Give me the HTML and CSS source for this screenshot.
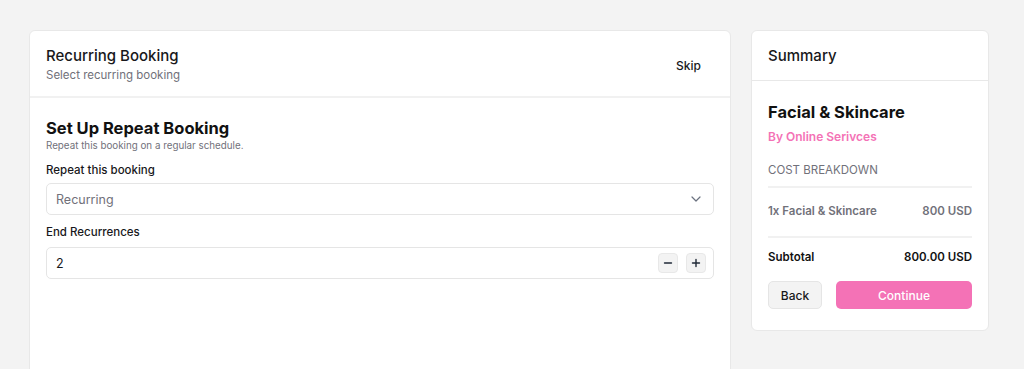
FILE: index.html
```html
<!DOCTYPE html>
<html>
<head>
    <meta charset="UTF-8">
    <title>Recurring Booking</title>
    <link rel="stylesheet" href="styles.css">
</head>
<body>
<div class="page">

    <div class="card main_card">
        <div class="card_head">
            <div>
                <h2 class="card_title">Recurring Booking</h2>
                <p class="card_sub">Select recurring booking</p>
            </div>
            <button class="skip_btn" type="button">Skip</button>
        </div>
        <div class="card_body">
            <h3 class="section_title">Set Up Repeat Booking</h3>
            <p class="section_sub">Repeat this booking on a regular schedule.</p>

            <div class="field">
                <label class="field_label">Repeat this booking</label>
                <div class="input_box">
                    <span class="placeholder">Recurring</span>
                    <svg class="chevron" width="10" height="6" viewBox="0 0 10 6">
                        <path d="M1 1l4 4 4-4" fill="none" stroke="#6b7280" stroke-width="1.2" stroke-linecap="round" stroke-linejoin="round"/>
                    </svg>
                </div>
            </div>

            <div class="field">
                <label class="field_label">End Recurrences</label>
                <div class="input_box">
                    <span class="value">2</span>
                    <div class="stepper">
                        <button type="button" class="step_btn">
                            <svg width="10" height="10" viewBox="0 0 10 10"><path d="M1.5 5h7" stroke="#1f2937" stroke-width="1.4" stroke-linecap="round"/></svg>
                        </button>
                        <button type="button" class="step_btn">
                            <svg width="10" height="10" viewBox="0 0 10 10"><path d="M1.5 5h7M5 1.5v7" stroke="#1f2937" stroke-width="1.4" stroke-linecap="round"/></svg>
                        </button>
                    </div>
                </div>
            </div>
        </div>
    </div>

    <div class="card summary_card">
        <div class="card_head summary_head">
            <h2 class="card_title">Summary</h2>
        </div>
        <div class="card_body summary_body">
            <h3 class="section_title">Facial &amp; Skincare</h3>
            <p class="provider">By Online Serivces</p>
            <p class="breakdown">COST BREAKDOWN</p>
            <div class="cost_row item_row">
                <span>1x Facial &amp; Skincare</span>
                <span>800 USD</span>
            </div>
            <div class="cost_row total_row">
                <span>Subtotal</span>
                <span>800.00 USD</span>
            </div>
            <div class="actions">
                <button type="button" class="btn btn_back">Back</button>
                <button type="button" class="btn btn_continue">Continue</button>
            </div>
        </div>
    </div>

</div>
</body>
</html>
```

FILE: styles.css
```css
* {
    box-sizing: border-box;
}

body {
    margin: 0;
    background: #f3f3f3;
    font-family: Inter, "Noto Sans", Arial, sans-serif;
    color: #111827;
}

h2, h3, p {
    margin: 0;
}

button {
    font-family: inherit;
    cursor: pointer;
}

.page {
    display: flex;
    align-items: flex-start;
    gap: 20px;
    padding: 30px 0 0 29px;
    height: 369px;
    overflow: hidden;
}

.card {
    background: #fff;
    border: 1px solid #e8e8e8;
    border-radius: 6px;
}

.main_card {
    width: 702px;
    height: 360px;
}

.summary_card {
    width: 238px;
}

.card_head {
    display: flex;
    align-items: center;
    justify-content: space-between;
    padding: 15px 17px 12px 16px;
    border-bottom: 2px solid #f1f1f1;
}

.card_title {
    font-size: 15px;
    line-height: 20px;
    font-weight: 500;
    color: #18181b;
}

.card_sub {
    font-size: 11.5px;
    line-height: 18px;
    color: #71717a;
}

.skip_btn {
    border: none;
    background: none;
    padding: 6px 12px;
    font-size: 12px;
    font-weight: 500;
    color: #18181b;
}

.card_body {
    padding: 18px 16px;
}

.section_title {
    font-size: 16.5px;
    line-height: 24px;
    font-weight: 700;
    color: #111;
}

.section_sub {
    font-size: 9.8px;
    line-height: 12px;
    color: #71717a;
}

.field {
    margin-top: 11px;
}

.field_label {
    display: block;
    font-size: 11.5px;
    line-height: 15px;
    font-weight: 500;
    color: #18181b;
    margin-bottom: 5px;
}

.field + .field {
    margin-top: 10px;
}

.field + .field .field_label {
    margin-bottom: 7px;
}

.input_box {
    display: flex;
    align-items: center;
    justify-content: space-between;
    height: 32px;
    padding: 0 7px 0 9px;
    border: 1px solid #e5e5e5;
    border-radius: 5px;
    font-size: 12.5px;
}

.placeholder {
    color: #71717a;
}

.value {
    color: #18181b;
}

.chevron {
    margin-right: 5px;
}

.stepper {
    display: flex;
    gap: 8px;
}

.step_btn {
    display: flex;
    align-items: center;
    justify-content: center;
    width: 20px;
    height: 20px;
    padding: 0;
    border: 1px solid #e8e8e8;
    border-radius: 4px;
    background: #f3f3f3;
}

.summary_head {
    padding: 15px 16px 14px;
    border-bottom-width: 1px;
    border-bottom-color: #e8e8e8;
}

.summary_body {
    padding: 19px 16px 21px;
}

.provider {
    margin-top: 5px;
    font-size: 12px;
    line-height: 16px;
    font-weight: 600;
    color: #f472b6;
}

.breakdown {
    margin-top: 17px;
    padding-bottom: 8px;
    font-size: 11.5px;
    line-height: 16px;
    color: #71717a;
    border-bottom: 2px solid #f1f1f1;
}

.cost_row {
    display: flex;
    justify-content: space-between;
    font-size: 11.5px;
    line-height: 16px;
    font-weight: 600;
}

.item_row {
    padding: 15px 0 17px;
    color: #71717a;
    border-bottom: 2px solid #f1f1f1;
}

.total_row {
    padding: 11px 0 16px;
    color: #111;
}

.actions {
    display: flex;
    gap: 14px;
}

.btn {
    height: 28px;
    border-radius: 5px;
    font-size: 12px;
    font-weight: 500;
}

.btn_back {
    width: 54px;
    background: #f3f3f3;
    border: 1px solid #e5e5e5;
    color: #18181b;
}

.btn_continue {
    flex: 1;
    background: #f472b6;
    border: none;
    color: #fff;
}
```
